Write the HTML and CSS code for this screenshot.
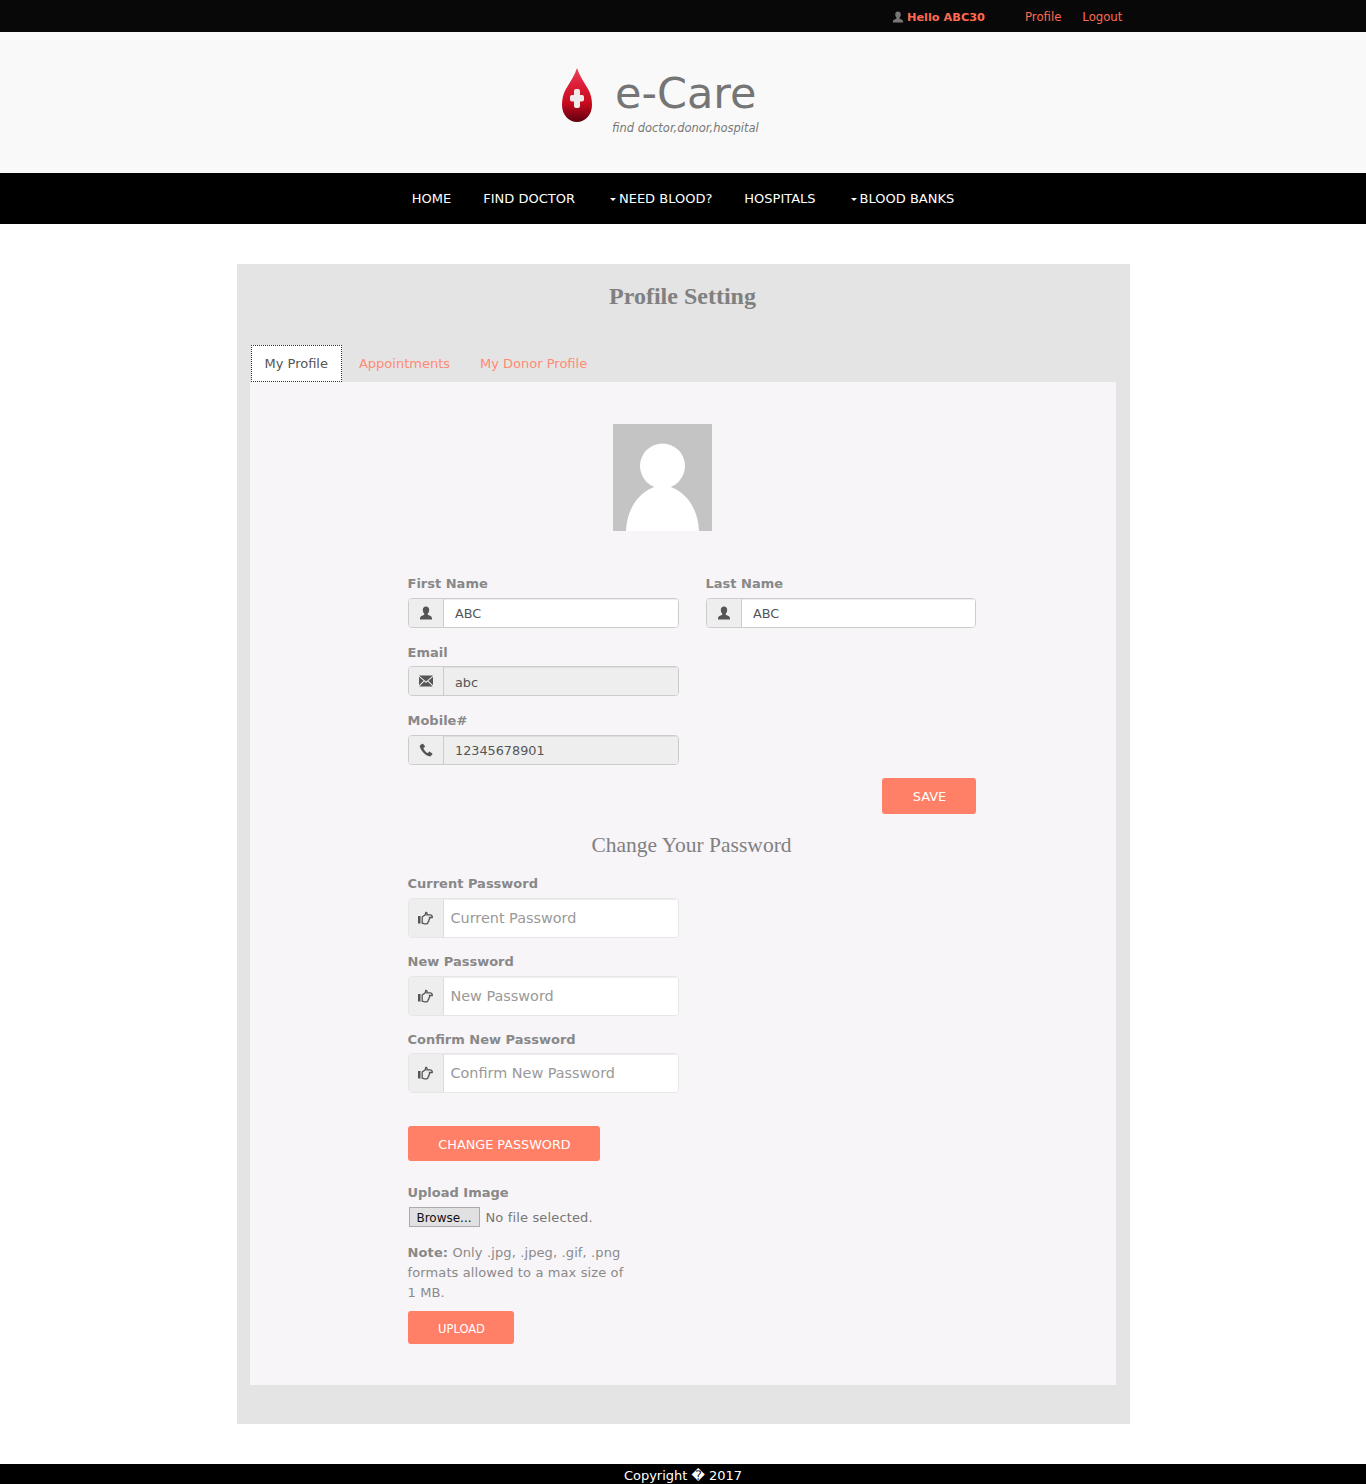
FILE: index.html
```html
<!DOCTYPE html>
<html>
<head>
    <meta charset="utf-8" />
    <meta name="viewport" content="width=device-width, initial-scale=1" />
    <title>Profile Setting</title>
    <link rel="stylesheet" href="styles.css">
</head>
<body>
    <svg class="sprites" width="0" height="0">
        <symbol id="i-user" viewBox="0 0 14 14">
            <path d="M7 .5c-2 0-3.200 1.500-3.200 3.500 0 1.500.6 2.800 1.400 3.600.3.400.2 1-.3 1.300C3.300 9.600 1 10 1 12.200V13.500h12v-1.300c0-2.200-2.300-2.600-3.900-3.300-.5-.3-.6-.9-.3-1.300.8-.8 1.400-2.100 1.400-3.600C10.200 2 9 .5 7 .5z" />
        </symbol>
        <symbol id="i-mail" viewBox="0 0 14 14">
            <path d="M0 1.500h14L7 7.500z" />
            <path d="M0 2.800 4.600 6.800 0 11.300zM14 2.800 9.400 6.800 14 11.300zM5.300 7.500 7 9l1.700-1.500 5 4.900H.3z" />
        </symbol>
        <symbol id="i-phone" viewBox="0 0 14 14">
            <path d="M3.400.8 1.300 2c-.6.400-.6 1.400-.2 2.400C2.300 7.800 6 12 10.200 13.300c.8.200 1.500 0 1.900-.5l1.300-1.600c.2-.3.200-.6-.1-.8l-2.500-1.700c-.3-.2-.6-.2-.8.100l-.8 1c-.2.200-.5.300-.8.100C6.900 9.300 5 6.900 4.500 5.500c-.1-.3 0-.6.300-.7l1-.7c.3-.2.300-.5.200-.8L4.200 1c-.2-.3-.5-.4-.8-.2z" />
        </symbol>
        <symbol id="i-hand" viewBox="0 0 15 14">
            <rect x="0" y="5" width="2.500" height="7.500" fill="#555" />
            <path class="hand" d="M4.200 6 7.200 3.800 7.800 1.300C8.900 1.200 9.400 2.200 8.900 3.800H12.500C13.700 4 14.600 5.400 14.200 6.500H11.500C11.800 7.800 11.300 8.800 10.800 9.100 11 10 10.500 10.800 10 11 10.100 12 9.500 12.800 8.500 12.800H6.500C5.500 12.800 5 12.300 4.200 12.200z" />
        </symbol>
    </svg>

    <div class="topbar">
        <div class="topbar-user">
            <svg class="topbar-icon"><use href="#i-user" /></svg>
            <b>Hello ABC30</b>
        </div>
        <a class="topbar-link" href="#">Profile</a>
        <a class="topbar-link" href="#">Logout</a>
    </div>

    <header class="brand">
        <svg class="drop" viewBox="0 0 30 54">
            <defs>
                <linearGradient id="drop-fill" x1="0" y1="0" x2="0" y2="1">
                    <stop offset="0" stop-color="#e8455a" />
                    <stop offset="0.3" stop-color="#dd1f38" />
                    <stop offset="0.65" stop-color="#c90a1e" />
                    <stop offset="1" stop-color="#5e0010" />
                </linearGradient>
            </defs>
            <path fill="url(#drop-fill)" d="M15 0C17 7 22 14 26 21c3 5 4 10 4 16 0 10-7 17-15 17S0 47 0 37c0-6 1-11 4-16C8 14 13 7 15 0z" />
            <rect x="12" y="21" width="6" height="19" rx="2" fill="#f0eaea" />
            <rect x="8" y="27" width="14" height="6.500" rx="2" fill="#f0eaea" />
        </svg>
        <div class="brand-text">
            <div class="brand-name">e-Care</div>
            <div class="brand-tag">find doctor,donor,hospital</div>
        </div>
    </header>

    <nav class="mainnav">
        <a href="#">HOME</a>
        <a href="#">FIND DOCTOR</a>
        <a class="has-caret" href="#">NEED BLOOD?</a>
        <a href="#">HOSPITALS</a>
        <a class="has-caret" href="#">BLOOD BANKS</a>
    </nav>

    <main class="card">
        <h2 class="card-title">Profile Setting</h2>

        <div class="tabs">
            <a class="tab active" href="#">My Profile</a>
            <a class="tab" href="#">Appointments</a>
            <a class="tab" href="#">My Donor Profile</a>
        </div>

        <div class="panel">
            <svg class="avatar" viewBox="0 0 99 107">
                <rect width="99" height="107" fill="#c4c4c4" />
                <circle cx="49.500" cy="42" r="22.500" fill="#fff" />
                <path fill="#fff" d="M13 107C14 85 25 70 39 64 46 60 53 60 60 64 74 70 85 85 86 107z" />
            </svg>

            <div class="row">
                <div class="field">
                    <label>First Name</label>
                    <div class="input-group">
                        <span class="addon"><svg><use href="#i-user" /></svg></span>
                        <input type="text" value="ABC" />
                    </div>
                </div>
                <div class="field">
                    <label>Last Name</label>
                    <div class="input-group">
                        <span class="addon"><svg><use href="#i-user" /></svg></span>
                        <input type="text" value="ABC" />
                    </div>
                </div>
            </div>
            <div class="field">
                <label>Email</label>
                <div class="input-group">
                    <span class="addon"><svg><use href="#i-mail" /></svg></span>
                    <input type="text" value="abc" readonly />
                </div>
            </div>
            <div class="field">
                <label>Mobile#</label>
                <div class="input-group">
                    <span class="addon"><svg><use href="#i-phone" /></svg></span>
                    <input type="text" value="12345678901" readonly />
                </div>
            </div>
            <div class="save-row">
                <button class="btn btn-save">SAVE</button>
            </div>

            <h3 class="section-title">Change Your Password</h3>

            <div class="field tall">
                <label>Current Password</label>
                <div class="input-group">
                    <span class="addon"><svg><use href="#i-hand" /></svg></span>
                    <input type="password" placeholder="Current Password" />
                </div>
            </div>
            <div class="field tall">
                <label>New Password</label>
                <div class="input-group">
                    <span class="addon"><svg><use href="#i-hand" /></svg></span>
                    <input type="password" placeholder="New Password" />
                </div>
            </div>
            <div class="field tall">
                <label>Confirm New Password</label>
                <div class="input-group">
                    <span class="addon"><svg><use href="#i-hand" /></svg></span>
                    <input type="password" placeholder="Confirm New Password" />
                </div>
            </div>
            <button class="btn btn-change">CHANGE PASSWORD</button>

            <div class="upload">
                <label>Upload Image</label>
                <div class="file-row">
                    <button class="browse">Browse...</button>
                    <span>No file selected.</span>
                </div>
                <p class="note"><b>Note:</b> Only .jpg, .jpeg, .gif, .png formats allowed to a max size of 1 MB.</p>
                <button class="btn btn-upload">UPLOAD</button>
            </div>
        </div>
    </main>

    <footer class="footer">Copyright � 2017</footer>
</body>
</html>
```

FILE: styles.css
```css
html, body {
    margin: 0;
    background-color: white;
    font: 13px "DejaVu Sans", sans-serif;
    color: #777;
}

a {
    text-decoration: none;
}

.sprites {
    position: absolute;
}

.topbar {
    height: 32px;
    box-sizing: border-box;
    padding: 2px 0 0 892px;
    background-color: #080808;
    display: flex;
    align-items: center;
    font-size: 12px;
}

.topbar-user {
    display: flex;
    align-items: center;
    width: 133px;
    color: #ff6a50;
    font-size: 11.3px;
}

.topbar-icon {
    width: 12px;
    height: 12px;
    margin-right: 3px;
    fill: #777;
}

.topbar-link {
    color: #ff6a50;
    margin-right: 21px;
    font-size: 11.7px;
}

.brand {
    height: 141px;
    background-color: #f9f9f9;
    display: flex;
    align-items: flex-start;
    padding-left: 562px;
}

.drop {
    width: 30px;
    height: 54px;
    margin-top: 36px;
}

.brand-text {
    margin-left: 20px;
    margin-top: 35px;
}

.brand-name {
    font-size: 43px;
    line-height: 52px;
    color: #757575;
    margin-left: 3px;
}

.brand-tag {
    font-size: 11.5px;
    font-style: italic;
    line-height: 16px;
    margin-top: 1px;
}

.mainnav {
    height: 51px;
    background-color: black;
    display: flex;
    justify-content: center;
    align-items: center;
    gap: 32px;
}

.mainnav a {
    color: white;
    font-size: 13px;
}

.has-caret::before {
    content: "";
    display: inline-block;
    border-top: 3px solid white;
    border-left: 3px solid transparent;
    border-right: 3px solid transparent;
    margin-left: 3px;
    margin-right: 3px;
    vertical-align: 2px;
}

.card {
    width: 866px;
    height: 1160px;
    margin: 40px auto;
    padding: 0 14px 0 13px;
    background-color: #e4e4e4;
    overflow: hidden;
}

.card-title {
    margin: 20px 0 37px;
    text-align: center;
    font: bold 24px/24px "Liberation Serif", serif;
    color: #808080;
}

.tabs {
    display: flex;
    height: 37px;
    padding-left: 1px;
}

.tab {
    padding: 0 13px;
    line-height: 37px;
    color: #ff8a75;
    margin-right: 4px;
}

.tab.active {
    background-color: white;
    border: 1px dotted #333;
    line-height: 35px;
    color: #555;
}

.panel {
    height: 1003px;
    padding: 42px 140px 0 158px;
    background-color: #f7f5f8;
    box-sizing: border-box;
}

.avatar {
    display: block;
    width: 99px;
    height: 107px;
    margin: 0 0 42px 205px;
}

.row {
    display: flex;
    gap: 27px;
}

.field {
    width: 271px;
    margin-bottom: 14px;
}

.row .field + .field {
    width: 270px;
}

label {
    display: block;
    font-weight: bold;
    line-height: 22px;
    margin-bottom: 2.6px;
    color: #888;
}

.input-group {
    display: flex;
    height: 30px;
    box-sizing: border-box;
    border: 1px solid #ccc;
    border-radius: 4px;
    overflow: hidden;
    background-color: white;
}

.addon {
    width: 34px;
    flex: none;
    display: flex;
    align-items: center;
    justify-content: center;
    background-color: #eee;
    border-right: 1px solid #ccc;
}

.addon svg {
    width: 14px;
    height: 14px;
    fill: #555;
}

.hand {
    fill: none;
    stroke: #555;
    stroke-width: 1.3;
}

input {
    flex: 1;
    min-width: 0;
    border: 0;
    outline: 0;
    padding: 2px 11.5px 0;
    box-shadow: inset 0 1px 1px rgba(0, 0, 0, .075);
    font: 12.8px "DejaVu Sans", sans-serif;
    color: #555;
    background-color: white;
}

input[readonly] {
    background-color: #eee;
}

.field.tall {
    margin-bottom: 13px;
}

.tall .input-group {
    height: 40px;
    border-color: #e6e6e6;
}

.tall .addon {
    border-right-color: #ddd;
}

.tall .addon svg {
    width: 15px;
}

.tall input {
    padding: 0 7px;
    font-size: 14.4px;
}

.tall input::placeholder {
    color: #999;
}

.save-row {
    display: flex;
    justify-content: flex-end;
    margin-top: -1px;
}

.btn {
    display: block;
    border: 0;
    border-radius: 3px;
    padding: 2px 0 0 2px;
    background-color: #ff8066;
    color: white;
    font: 13px "DejaVu Sans", sans-serif;
}

.btn-save {
    width: 94px;
    height: 36px;
}

.section-title {
    margin: 19px 0 16.7px;
    text-align: center;
    font: normal 21.5px/24px "Liberation Serif", serif;
    color: #808080;
}

.btn-change {
    width: 192px;
    height: 35px;
    margin-top: 33px;
    font-size: 12.8px;
}

.upload {
    margin-top: 20px;
}

.upload label {
    line-height: 24px;
    margin-bottom: 1px;
}

.file-row {
    display: flex;
    align-items: center;
    gap: 6px;
    height: 22px;
    letter-spacing: .15px;
}

.browse {
    width: 71px;
    height: 20px;
    margin-left: 1px;
    padding: 2px 0 0;
    border: 1px solid #aaa;
    background-color: #e1e1e1;
    color: #111;
    font: 12px "DejaVu Sans", sans-serif;
}

.note {
    width: 222px;
    margin: 15px 0 8px;
    line-height: 20px;
    letter-spacing: .12px;
    color: #8a8a8a;
}

.note b {
    color: #888;
}

.btn-upload {
    width: 106px;
    height: 33px;
    font-size: 11.5px;
}

.footer {
    height: 20px;
    overflow: hidden;
    background-color: black;
    color: white;
    text-align: center;
    line-height: 23px;
}
```
